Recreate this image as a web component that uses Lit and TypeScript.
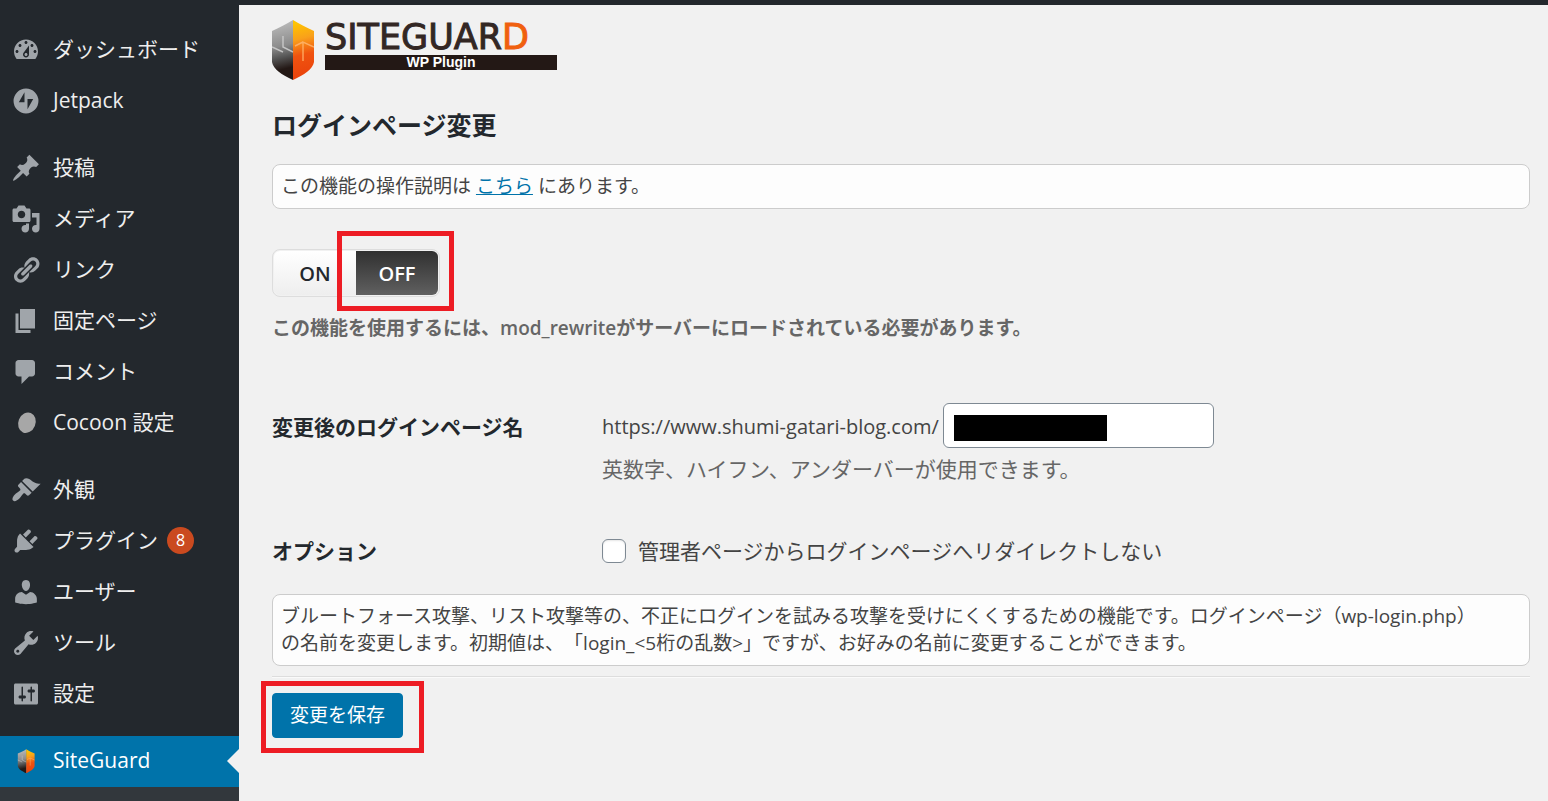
import { LitElement, html, css, svg, nothing } from "lit";
import { customElement, property, state } from "lit/decorators.js";

const ICONS: Record<string, string> = {
  dashboard:
    "M3.76 16h12.48c1.1-1.37 1.76-3.11 1.76-5 0-4.42-3.58-8-8-8s-8 3.58-8 8c0 1.89.66 3.63 1.76 5zM10 4c.55 0 1 .45 1 1s-.45 1-1 1-1-.45-1-1 .45-1 1-1zM6 6c.55 0 1 .45 1 1s-.45 1-1 1-1-.45-1-1 .45-1 1-1zm8 0c.55 0 1 .45 1 1s-.45 1-1 1-1-.45-1-1 .45-1 1-1zm-5.37 5.55L12 7v6c0 1.1-.9 2-2 2s-2-.9-2-2c0-.57.24-1.08.63-1.45zM4 10c.55 0 1 .45 1 1s-.45 1-1 1-1-.45-1-1 .45-1 1-1zm12 0c.55 0 1 .45 1 1s-.45 1-1 1-1-.45-1-1 .45-1 1-1zm-5 3c0-.55-.45-1-1-1s-1 .45-1 1 .45 1 1 1 1-.45 1-1z",
  jetpack:
    "M10 1.7a8.3 8.3 0 1 0 0 16.6 8.3 8.3 0 0 0 0-16.6zM9 10.9H5.2L9 4.1zM11 15.5V8.7h3.8z",
  post:
    "M10.44 3.02l1.82-1.82 6.36 6.35-1.83 1.82c-1.05-.68-2.48-.57-3.41.36l-.75.75c-.92.93-1.04 2.35-.35 3.41l-1.83 1.82-2.41-2.41-2.8 2.79c-.42.42-3.38 2.71-3.8 2.29s1.86-3.39 2.28-3.81l2.79-2.79L4.1 9.36l1.83-1.82c1.05.69 2.48.57 3.4-.36l.75-.75c.93-.92 1.05-2.35.36-3.41z",
  media:
    "M13 11V4c0-.55-.45-1-1-1h-1.67L9 1H5L3.67 3H2c-.55 0-1 .45-1 1v7c0 .55.45 1 1 1h10c.55 0 1-.45 1-1zM7 4.5c1.38 0 2.5 1.12 2.5 2.5S8.38 9.5 7 9.5 4.5 8.38 4.5 7 5.62 4.5 7 4.5zM14 6h5v10.5c0 1.38-1.12 2.5-2.5 2.5S14 17.88 14 16.5s1.12-2.5 2.5-2.5c.17 0 .34.02.5.05V9h-3V6zm-4 8.05V13h2v3.5c0 1.38-1.12 2.5-2.5 2.5S7 17.88 7 16.5 8.12 14 9.5 14c.17 0 .34.02.5.05z",
  links:
    "M17.74 2.76c1.68 1.69 1.68 4.41 0 6.1l-1.53 1.52c-1.12 1.12-2.7 1.47-4.14 1.09l2.62-2.61.76-.77.76-.76c.84-.84.84-2.2 0-3.04-.84-.85-2.2-.85-3.04 0l-.77.76-3.38 3.38c-.37-1.44-.02-3.02 1.1-4.14l1.52-1.53c1.69-1.68 4.42-1.68 6.1 0zM8.59 13.43l5.34-5.34c.42-.42.42-1.1 0-1.52-.44-.43-1.13-.39-1.53 0l-5.33 5.34c-.42.42-.42 1.1 0 1.52.44.43 1.13.39 1.52 0zm-.76 2.29l4.14-4.15c.38 1.44.03 3.02-1.09 4.14l-1.52 1.53c-1.69 1.68-4.41 1.68-6.1 0-1.68-1.68-1.68-4.42 0-6.1l1.53-1.52c1.12-1.12 2.7-1.47 4.14-1.1l-4.14 4.15c-.85.84-.85 2.2 0 3.05.84.84 2.2.84 3.04 0z",
  page: "M6 15V2h10v13H6zm-1 1h8v2H3V5h2v11z",
  comments:
    "M5 2h9c1.1 0 2 .9 2 2v7c0 1.1-.9 2-2 2h-2l-5 5v-5H5c-1.1 0-2-.9-2-2V4c0-1.1.9-2 2-2z",
  appearance:
    "M14.48 11.06L7.41 3.99l1.5-1.5c.5-.56 2.3-.47 3.51.32 1.21.8 1.43 1.28 2.91 2.1 1.18.64 2.45 1.26 4.45.85zm-.71.71L6.7 4.7 4.93 6.47c-.39.39-.39 1.02 0 1.41l1.06 1.06c.39.39.39 1.03 0 1.42-.6.6-1.43 1.11-2.21 1.69-.35.26-.7.53-1.01.84C1.43 14.23.4 16.08 1.4 17.07c.99 1 2.84-.03 4.18-1.36.31-.31.58-.66.85-1.02.57-.78 1.08-1.61 1.69-2.21.39-.39 1.02-.39 1.41 0l1.06 1.06c.39.39 1.02.39 1.41 0z",
  plugins:
    "M13.11 4.36L9.87 7.6 8 5.73l3.24-3.24c.35-.34 1.05-.2 1.56.32.52.51.66 1.21.31 1.55zm-8 1.77l.91-1.12 9.01 9.01-1.19.84c-.71.71-2.63 1.16-3.82 1.16H6.14L4.9 17.26c-.59.59-1.54.59-2.12 0-.59-.58-.59-1.53 0-2.12l1.24-1.24v-3.88c0-1.13.4-3.19 1.09-3.89zm7.26 3.97l3.24-3.24c.34-.35 1.04-.21 1.55.31.52.51.66 1.21.31 1.55l-3.24 3.25z",
  users:
    "M10 9.25c-2.27 0-2.73-3.44-2.73-3.44C7 4.02 7.82 2 9.97 2c2.16 0 2.98 2.02 2.71 3.81 0 0-.41 3.44-2.68 3.44zm0 2.57L12.72 10c2.39 0 4.52 2.33 4.52 4.53v2.49s-3.65 1.13-7.24 1.13c-3.65 0-7.24-1.13-7.24-1.13v-2.49c0-2.25 1.94-4.48 4.47-4.48z",
  tools:
    "M16.68 9.77c-1.34 1.34-3.3 1.67-4.95.99l-5.41 6.52c-.99.99-2.59.99-3.58 0s-.99-2.59 0-3.57l6.52-5.42c-.68-1.65-.35-3.61.99-4.95 1.28-1.28 3.12-1.62 4.72-1.06l-2.89 2.89 2.82 2.82 2.86-2.87c.53 1.58.18 3.39-1.08 4.65zM3.81 16.21c.4.39 1.04.39 1.43 0 .4-.4.4-1.04 0-1.43-.39-.4-1.03-.4-1.43 0-.39.39-.39 1.03 0 1.43z",
  settings:
    "M18 16V4c0-.55-.45-1-1-1H3c-.55 0-1 .45-1 1v12c0 .55.45 1 1 1h14c.55 0 1-.45 1-1zM8 11h1c.55 0 1 .45 1 1s-.45 1-1 1H8v1.5c0 .28-.22.5-.5.5s-.5-.22-.5-.5V13H6c-.55 0-1-.45-1-1s.45-1 1-1h1V5.5c0-.28.22-.5.5-.5s.5.22.5.5V11zm5-2h-1c-.55 0-1-.45-1-1s.45-1 1-1h1V5.5c0-.28.22-.5.5-.5s.5.22.5.5V7h1c.55 0 1 .45 1 1s-.45 1-1 1h-1v5.5c0 .28-.22.5-.5.5s-.5-.22-.5-.5V9z",
};

const shield = svg`
  <defs>
    <linearGradient id="steel" gradientUnits="userSpaceOnUse" x1="4" y1="6" x2="16" y2="56">
      <stop offset="0" stop-color="#b5b5b5"/>
      <stop offset="0.4" stop-color="#8c8c8c"/>
      <stop offset="0.62" stop-color="#555"/>
      <stop offset="0.85" stop-color="#231815"/>
    </linearGradient>
    <linearGradient id="fire" gradientUnits="userSpaceOnUse" x1="21" y1="4" x2="34" y2="56">
      <stop offset="0" stop-color="#ffc400"/>
      <stop offset="0.3" stop-color="#f9a01b"/>
      <stop offset="0.6" stop-color="#f0530f"/>
      <stop offset="1" stop-color="#ea430c"/>
    </linearGradient>
  </defs>
  <path fill="url(#steel)" d="M21 0C15 4 8 7 0 11v31c1 7 10 13 21 18z"/>
  <path fill="url(#fire)" d="M21 0c6 4 13 7 21 11v31c-1 7-10 13-21 18z"/>
  <path fill="none" stroke="#d0d0d0" stroke-width="1.4" opacity="0.85" d="M0 27l11 5M11 16v11l10 5"/>
  <path fill="none" stroke="#ffb56e" stroke-width="1.4" opacity="0.85" d="M42 27l-11-5v19M31 22l-8 4"/>
`;

@customElement("menu-icon")
class MenuIcon extends LitElement {
  @property() name = "";

  static styles = css`
    :host { display: block; width: 30px; height: 30px; }
    .icon { display: block; width: 30px; height: 30px; fill: #a0a5aa; }
  `;

  render() {
    if (this.name === "siteguard") {
      return html`<svg class="icon" viewBox="-17 -8 75 75" aria-hidden="true">${shield}</svg>`;
    }
    if (this.name === "cocoon") {
      return html`<svg class="icon" viewBox="0 0 20 20" aria-hidden="true">
        <ellipse cx="10.6" cy="9.8" rx="5.7" ry="7" transform="rotate(22 10.6 9.8)" fill="#a7a7a7"/>
      </svg>`;
    }
    return html`<svg class="icon" viewBox="0 0 20 20" aria-hidden="true">
      <path fill-rule="evenodd" d=${ICONS[this.name]}></path>
    </svg>`;
  }
}

interface Entry {
  icon: string;
  label: string;
  count?: number;
  current?: boolean;
}

const MENU: Entry[][] = [
  [
    { icon: "dashboard", label: "ダッシュボード" },
    { icon: "jetpack", label: "Jetpack" },
  ],
  [
    { icon: "post", label: "投稿" },
    { icon: "media", label: "メディア" },
    { icon: "links", label: "リンク" },
    { icon: "page", label: "固定ページ" },
    { icon: "comments", label: "コメント" },
    { icon: "cocoon", label: "Cocoon 設定" },
  ],
  [
    { icon: "appearance", label: "外観" },
    { icon: "plugins", label: "プラグイン", count: 8 },
    { icon: "users", label: "ユーザー" },
    { icon: "tools", label: "ツール" },
    { icon: "settings", label: "設定" },
  ],
  [{ icon: "siteguard", label: "SiteGuard", current: true }],
];

@customElement("admin-menu")
class AdminMenu extends LitElement {
  static styles = css`
    :host { display: flex; background: #23282d; }
    .menu { flex: 1; display: flex; flex-direction: column; gap: 16px; padding-top: 20px; }
    .group { list-style: none; margin: 0; padding: 0; }
    .group:last-child { flex: 1; background: #32373c; }
    .item {
      position: relative;
      box-sizing: border-box;
      display: flex;
      align-items: center;
      gap: 12px;
      height: 51px;
      padding: 0 0 2px 11px;
      color: #eee;
      font-size: 21px;
      line-height: 27px;
      text-decoration: none;
      white-space: nowrap;
    }
    .current { background: #0073aa; color: #fff; }
    .current::after {
      content: "";
      position: absolute;
      right: 0;
      top: 13px;
      border: 12px solid transparent;
      border-left-width: 0;
      border-right-color: #f1f1f1;
    }
    .label { display: flex; align-items: center; gap: 9px; }
    .count {
      width: 27px;
      height: 27px;
      border-radius: 50%;
      background: #ca4a1f;
      color: #fff;
      font-size: 16px;
      line-height: 27px;
      text-align: center;
    }
  `;

  render() {
    return html`<nav class="menu" aria-label="メインメニュー">
      ${MENU.map(
        (group) => html`<ul class="group">
          ${group.map(
            (e) => html`<li>
              <a class="item ${e.current ? "current" : ""}" href="#" aria-current=${e.current ? "page" : nothing}>
                <menu-icon name=${e.icon}></menu-icon>
                <span class="label">${e.label}${e.count ? html`<span class="count">${e.count}</span>` : nothing}</span>
              </a>
            </li>`
          )}
        </ul>`
      )}
    </nav>`;
  }
}

@customElement("app-root")
class AppRoot extends LitElement {
  @state() private enabled = false;

  static styles = css`
    :host {
      display: flex;
      flex-direction: column;
      min-height: 100vh;
      background: #f1f1f1;
      color: #444;
      font-family: "Open Sans", "Noto Sans CJK JP", sans-serif;
      text-spacing-trim: space-all;
    }
    * { box-sizing: border-box; }
    .adminbar { height: 5px; background: #23282d; }
    .body { flex: 1; display: flex; }
    admin-menu { flex: 0 0 239px; }
    .main { flex: 1; min-width: 0; padding: 15px 18px 48px 33px; }

    .brand { display: flex; gap: 11px; height: 60px; }
    .shield { width: 42px; height: 60px; }
    .wordmark { width: 232px; display: flex; flex-direction: column; gap: 5px; padding-top: 4px; }
    .name {
      font-family: "DejaVu Sans", sans-serif;
      font-size: 35px;
      line-height: 26px;
      color: #332724;
      -webkit-text-stroke: 1px currentColor;
      white-space: nowrap;
    }
    .accent { color: #f0600f; }
    .edition {
      height: 15px;
      background: #231815;
      color: #fff;
      font-family: "Liberation Sans", sans-serif;
      font-size: 14px;
      font-weight: 700;
      line-height: 15px;
      text-align: center;
    }

    .title { margin: 27px 0 0; font-size: 25px; font-weight: 600; line-height: 36px; color: #23282d; }
    .panel {
      margin: 21px 0 0;
      padding: 8px;
      border: 1px solid #ccc;
      border-radius: 8px;
      background: #fdfdfd;
      font-size: 19px;
      line-height: 27px;
    }
    .panel a { color: #0073aa; }

    .switch {
      position: relative;
      display: flex;
      width: 168px;
      height: 48px;
      margin: 40px 0 0;
      padding: 1px;
      border: 1px solid #ddd;
      border-radius: 8px;
    }
    .choice {
      flex: 1;
      border-radius: 6px 0 0 6px;
      background: linear-gradient(#fff, #eee);
      color: #23282d;
      font-size: 20px;
      font-weight: 600;
      line-height: 46px;
      text-align: center;
      cursor: pointer;
    }
    .choice:last-of-type { border-radius: 0 6px 6px 0; }
    .selected { background: linear-gradient(#303030, #606060); color: #fff; }
    .radio { position: absolute; opacity: 0; }
    .mark { position: absolute; border: 5px solid #ed1c24; pointer-events: none; }
    .mark-switch { inset: -19px -15px -15px 64px; }
    .mark-save { inset: -12px -21px -15px -11px; }

    .note { margin: 18px 0 0; font-size: 19px; font-weight: 600; line-height: 27px; color: #666; }

    .fields {
      display: grid;
      grid-template-columns: 330px 1fr;
      row-gap: 52px;
      margin-top: 61px;
      font-size: 21px;
      line-height: 30px;
    }
    .term { font-weight: 600; color: #23282d; }
    .term-path { padding-top: 9px; }
    .address { display: flex; align-items: center; gap: 4px; }
    .origin { font-size: 20px; padding-top: 2px; }
    .entry { position: relative; }
    .text {
      display: block;
      width: 271px;
      height: 45px;
      padding: 0 12px;
      border: 1px solid #7e8993;
      border-radius: 6px;
      background: #fff;
      font: inherit;
    }
    .redaction { position: absolute; left: 11px; top: 12px; width: 153px; height: 26px; background: #000; }
    .hint { margin: 6px 0 0; color: #666; }
    .option { display: flex; align-items: center; gap: 12px; }
    .check {
      appearance: none;
      width: 24px;
      height: 24px;
      margin: 0;
      border: 1px solid #7e8993;
      border-radius: 6px;
      background: #fff;
      box-shadow: inset 0 1px 2px rgba(0, 0, 0, 0.1);
    }
    .check:checked { background: #0073aa; }
    .about { margin-top: 28px; }
    .rule { margin: 10px 0 0; border: 0; border-top: 1px solid #ddd; border-bottom: 1px solid #fafafa; }
    .actions { position: relative; width: max-content; margin-top: 15px; }
    .save {
      display: block;
      height: 45px;
      padding: 0 17px;
      border: 1px solid #0073aa;
      border-radius: 4px;
      background: #0073aa;
      color: #fff;
      font-family: inherit;
      font-size: 19px;
      line-height: 27px;
    }
  `;

  render() {
    return html`
      <div class="adminbar"></div>
      <div class="body">
        <admin-menu></admin-menu>
        <main class="main">
          <div class="brand">
            <svg class="shield" viewBox="0 0 42 60" aria-hidden="true">${shield}</svg>
            <div class="wordmark">
              <span class="name">SITEGUAR<span class="accent">D</span></span>
              <span class="edition">WP Plugin</span>
            </div>
          </div>
          <h1 class="title">ログインページ変更</h1>
          <p class="panel">この機能の操作説明は <a href="#">こちら</a> にあります。</p>

          <div class="switch" role="radiogroup" aria-label="ログインページ変更">
            <input class="radio" type="radio" name="enable" id="on" .checked=${this.enabled} @change=${() => (this.enabled = true)} />
            <label class="choice ${this.enabled ? "selected" : ""}" for="on">ON</label>
            <input class="radio" type="radio" name="enable" id="off" .checked=${!this.enabled} @change=${() => (this.enabled = false)} />
            <label class="choice ${this.enabled ? "" : "selected"}" for="off">OFF</label>
            <span class="mark mark-switch"></span>
          </div>
          <p class="note">この機能を使用するには、mod_rewriteがサーバーにロードされている必要があります。</p>

          <div class="fields">
            <label class="term term-path" for="path">変更後のログインページ名</label>
            <div>
              <div class="address">
                <span class="origin">https://www.shumi-gatari-blog.com/</span>
                <span class="entry">
                  <input class="text" id="path" type="text" />
                  <span class="redaction"></span>
                </span>
              </div>
              <p class="hint">英数字、ハイフン、アンダーバーが使用できます。</p>
            </div>
            <span class="term">オプション</span>
            <div class="option">
              <input class="check" id="redirect" type="checkbox" />
              <label for="redirect">管理者ページからログインページへリダイレクトしない</label>
            </div>
          </div>

          <p class="panel about">ブルートフォース攻撃、リスト攻撃等の、不正にログインを試みる攻撃を受けにくくするための機能です。ログインページ（wp-login.php）<br />の名前を変更します。初期値は、「login_&lt;5桁の乱数&gt;」ですが、お好みの名前に変更することができます。</p>
          <hr class="rule" />
          <div class="actions">
            <button class="save" type="button">変更を保存</button>
            <span class="mark mark-save"></span>
          </div>
        </main>
      </div>
    `;
  }
}
